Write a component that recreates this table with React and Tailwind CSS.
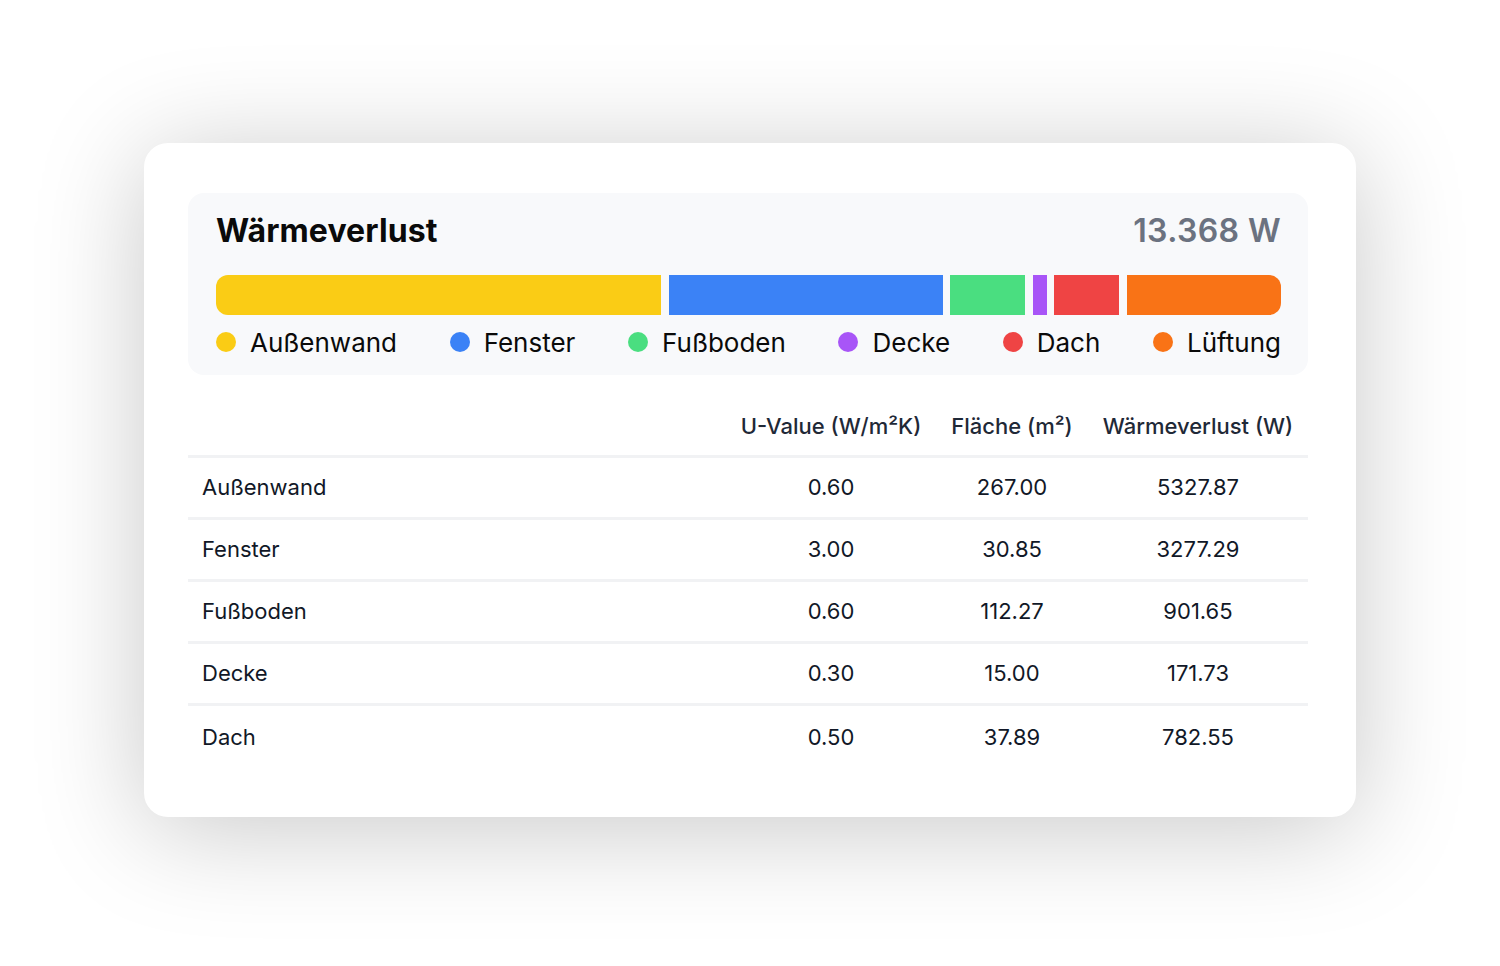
import React from "react";

const segments = [
  { name: "Außenwand", color: "bg-[#facc15]", w: 445 },
  { name: "Fenster", color: "bg-[#3b82f6]", w: 274 },
  { name: "Fußboden", color: "bg-[#4ade80]", w: 75 },
  { name: "Decke", color: "bg-[#a855f7]", w: 14 },
  { name: "Dach", color: "bg-[#ef4444]", w: 65 },
  { name: "Lüftung", color: "bg-[#f97316]", w: 154 },
];

const rows = [
  ["Außenwand", "0.60", "267.00", "5327.87"],
  ["Fenster", "3.00", "30.85", "3277.29"],
  ["Fußboden", "0.60", "112.27", "901.65"],
  ["Decke", "0.30", "15.00", "171.73"],
  ["Dach", "0.50", "37.89", "782.55"],
];

export default function App() {
  return (
    <div
      className="w-full h-[966px] bg-white flex justify-center pt-[143px]"
      style={{ fontFamily: "Inter, 'Noto Sans', sans-serif" }}
    >
      <div className="w-[1212px] h-[674px] bg-white rounded-[24px] shadow-[0_12px_110px_rgba(0,0,0,0.22)] pt-[50px] pl-[44px] pr-[48px] pb-[48px] flex flex-col">
        <div className="bg-[#f8f9fb] rounded-[16px] pl-[28px] pr-[27px] pt-[18px] pb-[17px]">
          <div className="flex items-center justify-between h-10">
            <div className="text-[32px] font-bold text-[#0a0a0a] tracking-[0.1px]">Wärmeverlust</div>
            <div className="text-[32px] font-semibold text-[#6b7280] tracking-[0.4px]">13.368 W</div>
          </div>
          <div className="mt-[24px] h-10 flex gap-[7.6px]">
            {segments.map((s, i) => (
              <div
                key={s.name}
                className={`${s.color} h-10 ${i === 0 ? "rounded-l-[12px]" : ""} ${i === segments.length - 1 ? "rounded-r-[12px]" : ""}`}
                style={{ flexGrow: s.w, flexBasis: 0 }}
              />
            ))}
          </div>
          <div className="mt-[11px] h-8 flex items-center justify-between">
            {segments.map((s) => (
              <div key={s.name} className="flex items-center gap-[14px]">
                <span className={`${s.color} w-5 h-5 rounded-full inline-block`} />
                <span className="text-[26px] text-[#0a0a0a]">{s.name}</span>
              </div>
            ))}
          </div>
        </div>

        <div className="mt-[23px]">
          <div className="grid grid-cols-[1fr_210px_152px_220px] h-[60px] items-center border-b-[3px] border-[#f1f2f4] text-[22px] font-medium text-[#1f2937]">
            <div />
            <div className="text-center">U-Value (W/m²K)</div>
            <div className="text-center">Fläche (m²)</div>
            <div className="text-center">Wärmeverlust (W)</div>
          </div>
          {rows.map((r, i) => (
            <div
              key={r[0]}
              className={`grid grid-cols-[1fr_210px_152px_220px] h-[62px] items-center text-[22px] text-[#111827] ${i < rows.length - 1 ? "border-b-[3px] border-[#f1f2f4]" : ""}`}
            >
              <div className="pl-[14px]">{r[0]}</div>
              <div className="text-center">{r[1]}</div>
              <div className="text-center">{r[2]}</div>
              <div className="text-center">{r[3]}</div>
            </div>
          ))}
        </div>
      </div>
    </div>
  );
}
